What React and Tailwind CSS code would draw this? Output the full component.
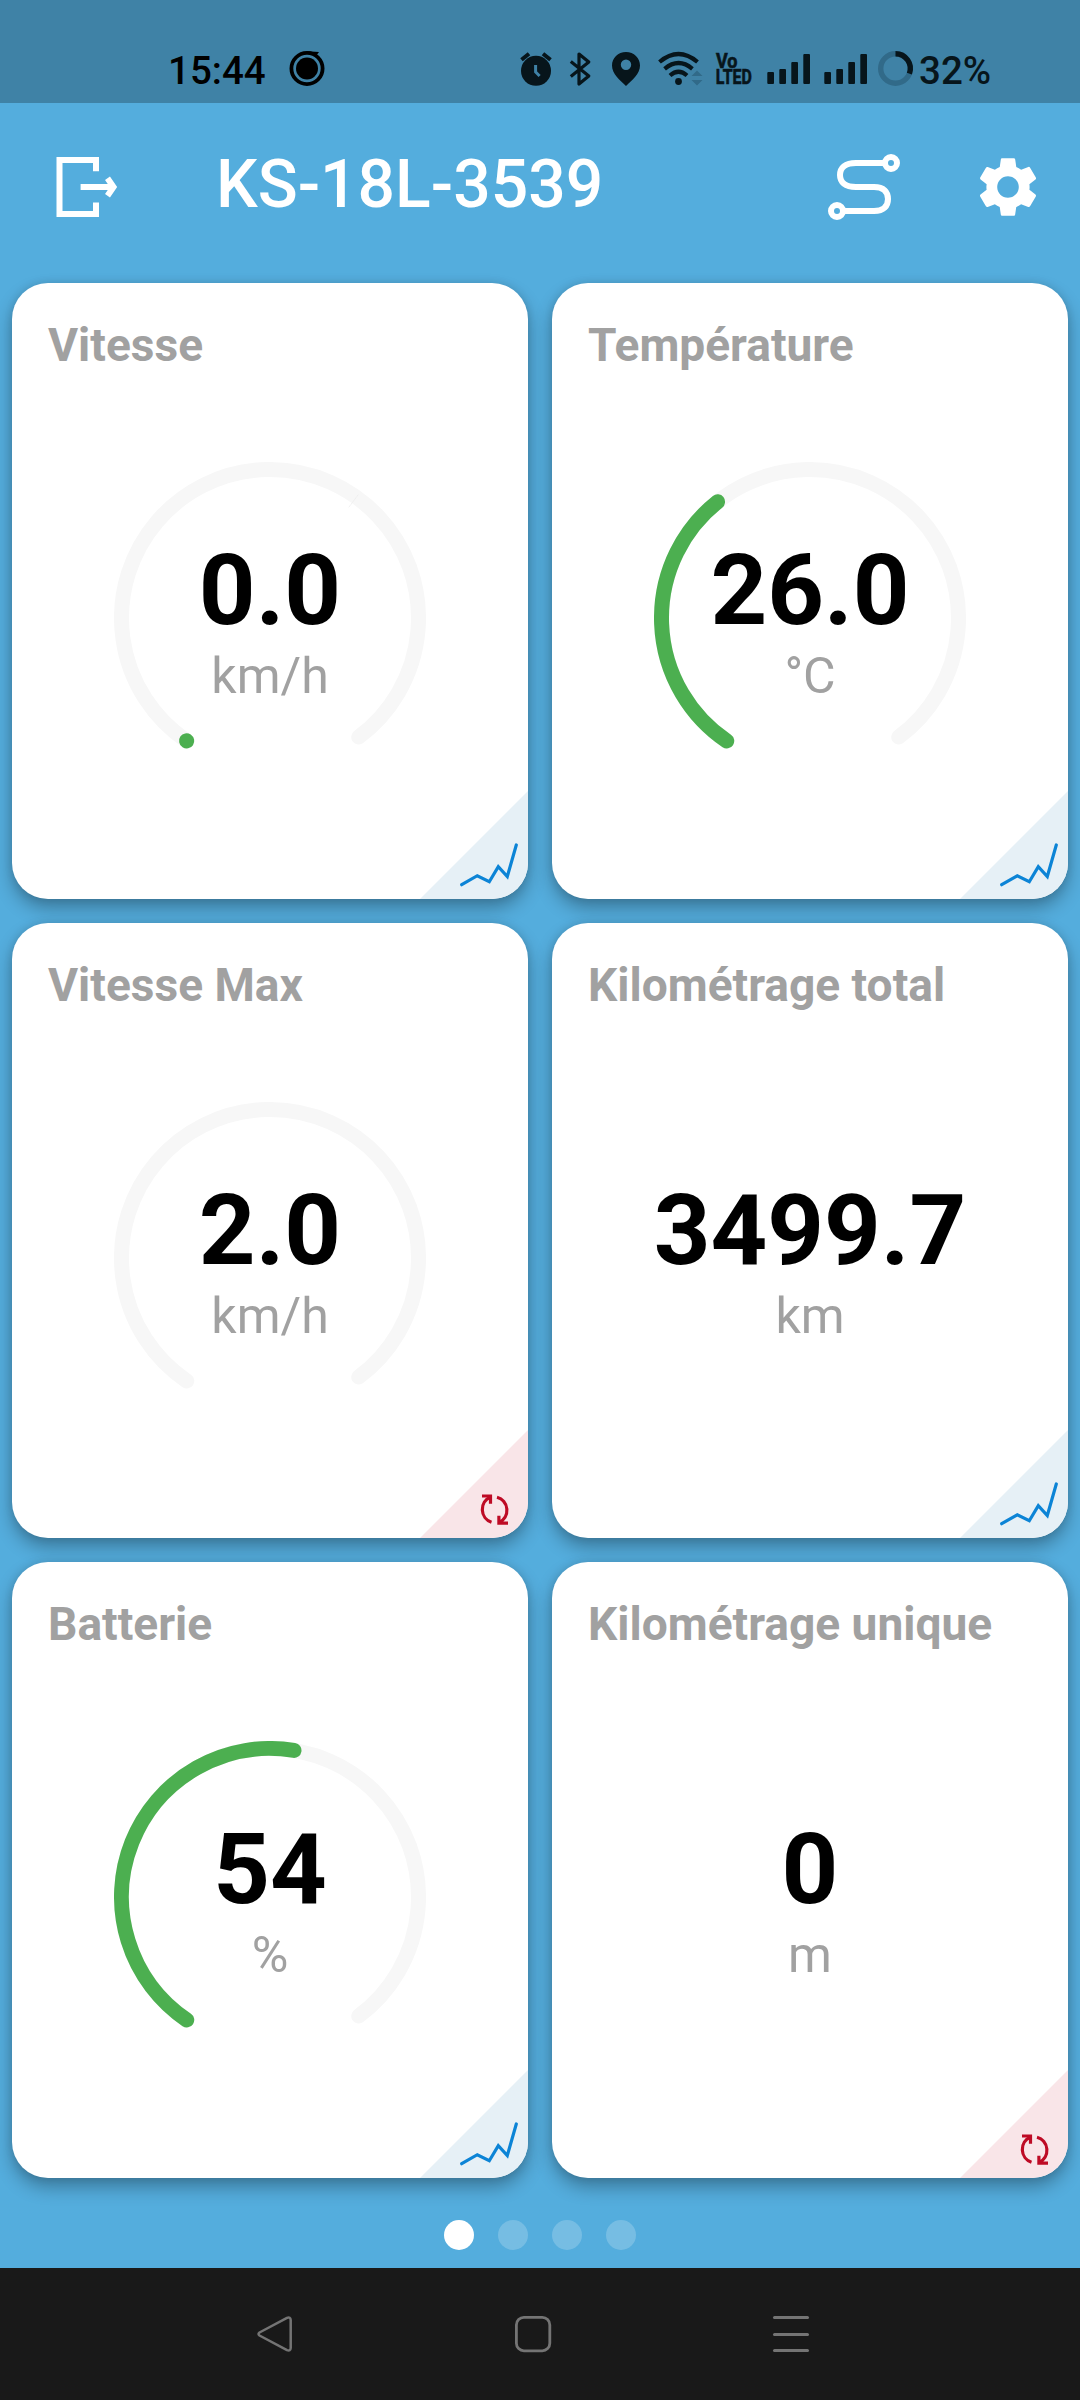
import React from "react";
import { MdSettings } from "react-icons/md";

const INK = "#07151b";

function StatusBar() {
  return (
    <div className="flex h-[103px] w-full bg-[#3f82a6]">
      <div className="ml-[168px] w-[120px] shrink-0 pt-[51px] text-[38.5px] font-medium leading-[40px] text-black">15:44</div>
      <svg className="h-[103px] w-[40px] shrink-0" viewBox="288 0 40 103">
        <circle cx="307" cy="68.5" r="15.6" fill="none" stroke="#000" strokeWidth="3.8" />
        <circle cx="307" cy="68.5" r="11" fill="#000" />
        <path d="M307 51.3l12 .6-3 4z" fill="#000" />
      </svg>
      <svg className="ml-[172px] h-[103px] w-[60px] shrink-0" viewBox="500 0 60 103">
        <circle cx="536" cy="70.8" r="15" fill={INK} />
        <path d="M521.5 59.7l7.5-6M543 53.7l7.5 6" stroke={INK} strokeWidth="4" fill="none" />
        <path d="M535.6 65v7l4 4" stroke="#3f82a6" strokeWidth="3" fill="none" />
      </svg>
      <svg className="h-[103px] w-[40px] shrink-0" viewBox="560 0 40 103">
        <path d="M570.8 61.5l18 14.5-9.8 8V54l9.8 8-18 14.5" stroke={INK} strokeWidth="3.2" fill="none" strokeLinejoin="round" />
      </svg>
      <svg className="h-[103px] w-[50px] shrink-0" viewBox="600 0 50 103">
        <path fillRule="evenodd" fill={INK} d="M626 52c-8 0-14 6-14 13.4 0 8.600 8 14.600 14 20.600 6-6 14-12 14-20.600C640 58 634 52 626 52zm0 7.600a5.200 5.200 0 1 1 0 10.400a5.200 5.200 0 0 1 0-10.400z" />
      </svg>
      <svg className="h-[103px] w-[60px] shrink-0" viewBox="650 0 60 103">
        <g fill="none" stroke={INK} strokeWidth="4.200">
          <path d="M659.500 62q19-16 38 0" />
          <path d="M664.600 68.800q14-11.600 27.800 0" />
          <path d="M670 75.500q8.500-7.500 17 0" />
        </g>
        <circle cx="678.500" cy="81.500" r="3.400" fill={INK} />
        <path d="M691.500 76l5.500-5.500 5.500 5.500zM691.500 80l5.500 5.500 5.500-5.500z" fill="#316a89" />
      </svg>
      <svg className="h-[103px] w-[45px] shrink-0 font-bold" viewBox="710 0 45 103" fill={INK} stroke={INK} strokeWidth="0.6">
        <text x="716" y="67.800" fontSize="19.500" textLength="21.500" lengthAdjust="spacingAndGlyphs">Vo</text>
        <text x="715.800" y="83.600" fontSize="19.500" textLength="36" lengthAdjust="spacingAndGlyphs">LTED</text>
      </svg>
      <svg className="h-[103px] w-[115px] shrink-0" viewBox="755 0 115 103">
        {[0, 57].map((dx) => (
          <g key={dx} fill={INK} transform={`translate(${dx} 0)`}>
            <rect x="767.300" y="72" width="6.700" height="12" rx="1" />
            <rect x="779.300" y="69" width="6.700" height="15" rx="1" />
            <rect x="791.300" y="62" width="6.700" height="22" rx="1" />
            <rect x="803.300" y="54" width="6.700" height="30" rx="1" />
          </g>
        ))}
      </svg>
      <svg className="h-[103px] w-[49px] shrink-0" viewBox="870 0 49 103">
        <circle cx="895.500" cy="68.500" r="14.800" fill="none" stroke="#316a89" strokeWidth="5.400" />
        <path d="M895.500 53.700a14.800 14.800 0 0 1 13.900 19.900" fill="none" stroke={INK} strokeWidth="5.400" />
      </svg>
      <div className="shrink-0 pt-[51px] text-[38.5px] font-medium leading-[40px] text-[#07151b]">32%</div>
    </div>
  );
}

function Header() {
  return (
    <header className="flex h-[180px] w-full text-white">
      <svg className="ml-[48px] h-[168px] w-[78px] shrink-0" viewBox="48 103 78 168" fill="none" stroke="#fff" strokeWidth="6">
        <path d="M96 171.300V160H59.500V214H96V202.500" />
        <path d="M80.600 187H113" />
        <path d="M107.500 178.300L113.500 187l-6 8.700" />
      </svg>
      <h1 className="ml-[90px] w-[602px] shrink-0 pt-[42px] text-[66px] font-medium leading-[80px]">KS-18L-3539</h1>
      <svg className="h-[168px] w-[90px] shrink-0" viewBox="818 103 90 168" fill="none" stroke="#fff" strokeWidth="6">
        <circle cx="891" cy="163" r="6" />
        <circle cx="837" cy="211" r="6" />
        <path d="M884 163H856C845 163 840 168 840 175S845 187 856 187H874C884 187 888 192 888 199S884 211 874 211H844" />
      </svg>
      <MdSettings className="ml-[64px] mt-[48px] h-[72px] w-[72px] shrink-0" />
    </header>
  );
}

const R = 148.5;
const point = (deg) => {
  const a = (deg * Math.PI) / 180;
  return [156 + R * Math.sin(a), 156 - R * Math.cos(a)];
};
const arc = (from, to) => {
  const [x1, y1] = point(from);
  const [x2, y2] = point(to);
  return `M${x1} ${y1}A${R} ${R} 0 ${to - from > 180 ? 1 : 0} 1 ${x2} ${y2}`;
};

function Gauge({ end, tick }) {
  return (
    <svg className="absolute left-[102px] top-[179px] h-[312px] w-[312px]" viewBox="0 0 312 312" fill="none" strokeLinecap="round" strokeWidth="15">
      <path d={arc(-145.9, 143.3)} stroke="#f7f7f7" />
      {tick && <path d="M235 45l9-12" stroke="#e4e4e4" strokeWidth="0.5" strokeDasharray="1 1" />}
      {end !== null && <path d={arc(-145.9, end)} stroke="#4caf50" />}
    </svg>
  );
}

function Corner({ kind }) {
  return (
    <svg className="absolute bottom-0 right-0 h-[108px] w-[108px]" viewBox="-1 -1 108 108" fill="none">
      {kind === "chart" ? (
        <>
          <path d="M107 -1V107H-1z" fill="#e6f0f6" />
          <path d="M40.700 92.700L56.300 83.700 68.300 89.700 77.300 74.700 86.300 84.500 95.300 53" stroke="#0c84d6" strokeWidth="3.200" strokeLinecap="round" />
        </>
      ) : (
        <>
          <path d="M107 -1V107H-1z" fill="#f9e5e8" />
          <g stroke="#be0b25" strokeWidth="3.200">
            <path d="M70.500 91.200A13.500 13.500 0 0 1 69.500 66" />
            <path d="M61 65H69.500V72.700" />
            <path d="M76 66.200A13.500 13.500 0 0 1 78 91.500" />
            <path d="M87 92.200H77.900V84.700" />
          </g>
        </>
      )}
    </svg>
  );
}

const cards = [
  { title: "Vitesse", value: "0.0", unit: "km/h", gauge: true, end: -145.8, tick: true, kind: "chart" },
  { title: "Température", value: "26.0", unit: "°C", gauge: true, end: -38.5, kind: "chart" },
  { title: "Vitesse Max", value: "2.0", unit: "km/h", gauge: true, end: null, kind: "reset" },
  { title: "Kilométrage total", value: "3499.7", unit: "km", kind: "chart" },
  { title: "Batterie", value: "54", unit: "%", gauge: true, end: 9.3, kind: "chart" },
  { title: "Kilométrage unique", value: "0", unit: "m", kind: "reset" },
];

function Card({ title, value, unit, gauge, end, tick, kind }) {
  return (
    <section className="relative h-[615.6px] overflow-hidden rounded-[36px] bg-white shadow-[0_9px_18px_rgba(0,0,0,0.3),0_0_9px_rgba(0,0,0,0.1)]">
      {gauge && <Gauge end={end} tick={tick} />}
      <h2 className="pl-[36px] pt-[35px] text-[46.1px] font-bold leading-[54px] text-[#a1a1a1]">{title}</h2>
      <div className="pt-[168px] text-center text-[99px] font-bold leading-[100px] text-black">{value}</div>
      <div className="pt-[6px] text-center text-[50px] leading-[60px] text-[#a1a1a1]">{unit}</div>
      <Corner kind={kind} />
    </section>
  );
}

export default function App() {
  return (
    <div className="flex h-[2400px] w-[1080px] flex-col overflow-hidden bg-[#54addd] font-['Roboto',sans-serif]">
      <StatusBar />
      <Header />
      <main className="grid h-[1937px] shrink-0 grid-cols-2 content-start gap-x-[24px] gap-y-[24px] px-[12px]">
        {cards.map((c) => (
          <Card key={c.title} {...c} />
        ))}
      </main>
      <div className="flex h-[48px] shrink-0 justify-center gap-[24px]">
        <span className="h-[30px] w-[30px] rounded-full bg-white" />
        <span className="h-[30px] w-[30px] rounded-full bg-white/20" />
        <span className="h-[30px] w-[30px] rounded-full bg-white/20" />
        <span className="h-[30px] w-[30px] rounded-full bg-white/20" />
      </div>
      <nav className="flex h-[132px] shrink-0 items-start bg-[#191919] pl-[256px] pt-[47px]">
        <svg className="h-[38px] w-[38px]" viewBox="0 0 38 38" fill="none" stroke="#747474" strokeWidth="2.500" strokeLinejoin="round">
          <path d="M31 2.800L3.500 17.500Q1.500 19 3.500 20.500L31 35.200Q34.500 36.500 34.700 33V5Q34.500 1.500 31 2.800z" />
        </svg>
        <svg className="ml-[220px] h-[38px] w-[38px]" viewBox="0 0 38 38" fill="none" stroke="#747474" strokeWidth="2.800">
          <rect x="2.400" y="2.400" width="33.400" height="33.400" rx="7.500" />
        </svg>
        <div className="ml-[221px] flex w-[36px] flex-col gap-[13.500px] pt-px">
          <span className="h-[3px] rounded-sm bg-[#747474]" />
          <span className="h-[3px] rounded-sm bg-[#747474]" />
          <span className="h-[3px] rounded-sm bg-[#747474]" />
        </div>
      </nav>
    </div>
  );
}
